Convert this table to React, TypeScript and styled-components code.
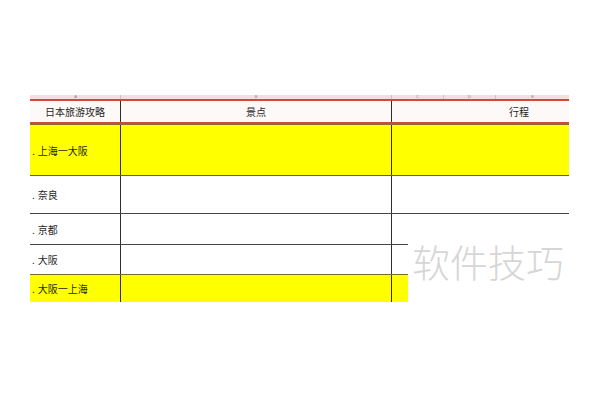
import React from "react";
import styled, { createGlobalStyle } from "styled-components";

const Global = createGlobalStyle`
  html, body { margin: 0; padding: 0; background: #ffffff; }
  body { font-family: "Noto Sans CJK SC", "Noto Sans", sans-serif; }
`;

const Page = styled.div`
  width: 600px;
  height: 400px;
  padding: 95px 0 0 30px;
  box-sizing: border-box;
`;

const Sheet = styled.div`
  position: relative;
  width: 539px;
`;

const LetterStrip = styled.div`
  display: grid;
  grid-template-columns: 90px 271px 52px 52px 74px;
  height: 4px;
  background: #f7dede;
`;

const Letter = styled.div<{ $sep?: boolean }>`
  font-family: "Liberation Sans", sans-serif;
  font-size: 4px;
  line-height: 4px;
  color: #9a7a7a;
  text-align: center;
  border-left: 1px solid ${(p) => (p.$sep ? "#e2b8b8" : "transparent")};
`;

const RedRule = styled.div`
  height: 2px;
  background: #d2483d;
`;

const HeaderBottom = styled.div`
  height: 2px;
  background: #cf4a3e;
  border-bottom: 1px solid #8c6b2b;
`;

const Row = styled.div<{ $h: number; $bg: string; $line?: string }>`
  display: grid;
  grid-template-columns: 90px 271px 178px;
  height: ${(p) => p.$h}px;
  background: ${(p) => p.$bg};
  border-bottom: ${(p) => (p.$line ? `1px solid ${p.$line}` : "none")};
`;

const Cell = styled.div<{ $divider?: boolean; $align?: string; $pad?: number }>`
  display: flex;
  align-items: center;
  justify-content: ${(p) => p.$align || "flex-start"};
  padding-left: ${(p) => p.$pad ?? 0}px;
  border-left: ${(p) => (p.$divider ? "1px solid #2e2e2e" : "none")};
  font-size: 10px;
  color: #1f1f1f;
  white-space: nowrap;
`;

const Dot = styled.span`
  margin: 0 3px 0 2px;
`;

const Mask = styled.div`
  position: absolute;
  left: 378px;
  top: 120px;
  width: 162px;
  height: 90px;
  background: #ffffff;
  display: flex;
  align-items: flex-start;
`;

const Watermark = styled.div`
  margin: 22px 0 0 4px;
  font-size: 38px;
  line-height: 48px;
  font-weight: 300;
  color: #d6d6d6;
  white-space: nowrap;
`;

const rows = [
  { label: "上海一大阪", h: 50, bg: "#ffff00", line: "#6e5f1c" },
  { label: "奈良", h: 37, bg: "#ffffff", line: "#444444" },
  { label: "京都", h: 30, bg: "#ffffff", line: "#444444" },
  { label: "大阪", h: 29, bg: "#ffffff", line: "#7a6a26" },
  { label: "大阪一上海", h: 27, bg: "#ffff00" },
];

export default function App() {
  return (
    <Page>
      <Global />
      <Sheet>
        <LetterStrip>
          <Letter>A</Letter>
          <Letter $sep>B</Letter>
          <Letter $sep>C</Letter>
          <Letter $sep>D</Letter>
          <Letter $sep>E</Letter>
        </LetterStrip>
        <RedRule />
        <Row $h={21} $bg="#fdf9f9">
          <Cell $align="center">日本旅游攻略</Cell>
          <Cell $divider $align="center">景点</Cell>
          <Cell $divider $pad={117}>行程</Cell>
        </Row>
        <HeaderBottom />
        {rows.map((r) => (
          <Row key={r.label} $h={r.h} $bg={r.bg} $line={r.line}>
            <Cell>
              <Dot>.</Dot>
              {r.label}
            </Cell>
            <Cell $divider />
            <Cell $divider />
          </Row>
        ))}
        <Mask>
          <Watermark>软件技巧</Watermark>
        </Mask>
      </Sheet>
    </Page>
  );
}
